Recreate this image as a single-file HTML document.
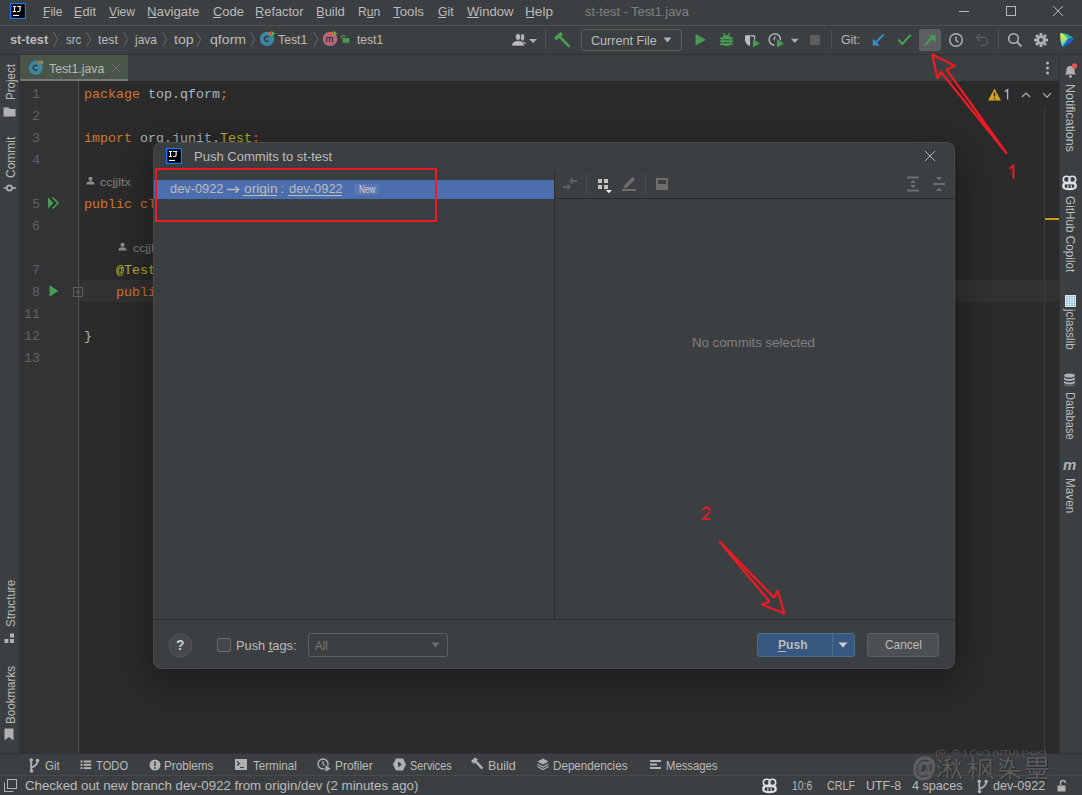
<!DOCTYPE html>
<html><head><meta charset="utf-8"><style>
html,body{margin:0;padding:0;}
body{width:1082px;height:795px;overflow:hidden;position:relative;background:#3C3F41;font-family:"Liberation Sans",sans-serif;}
.a{position:absolute;}
.t{position:absolute;white-space:pre;transform-origin:0 0;}
svg{position:absolute;overflow:visible;}
</style></head><body>
<div class="a" style="left:0px;top:25px;width:1082px;height:1px;background:#515151;"></div>
<div class="a" style="left:0px;top:54px;width:1082px;height:1px;background:#323232;"></div>
<div class="a" style="left:19px;top:55px;width:1px;height:698px;background:#323232;"></div>
<div class="a" style="left:20px;top:55px;width:108px;height:24px;background:#4A5449;"></div>
<div class="a" style="left:20px;top:79px;width:108px;height:3px;background:#747A80;"></div>
<div class="a" style="left:20px;top:81px;width:1039px;height:672px;background:#2B2B2B;"></div>
<div class="a" style="left:20px;top:81px;width:58px;height:672px;background:#313335;"></div>
<div class="a" style="left:78px;top:81px;width:1px;height:672px;background:#555555;"></div>
<div class="a" style="left:79px;top:280px;width:980px;height:22px;background:#323232;"></div>
<div class="a" style="left:20px;top:280px;width:58px;height:22px;background:#313335;"></div>
<div class="a" style="left:1059px;top:55px;width:1px;height:698px;background:#323232;"></div>
<div class="a" style="left:0px;top:753px;width:1082px;height:1px;background:#323232;"></div>
<div class="a" style="left:0px;top:775px;width:1082px;height:1px;background:#4A4A4A;"></div>
<svg style="left:10px;top:3px" width="16" height="16" viewBox="0 0 16 16"><rect x="0.6" y="0.6" width="14.8" height="14.8" fill="#000" stroke="#0A7CFF" stroke-width="1.2"/><path d="M2.9 3.5H6.1M4.5 3.5V8.5M2.9 8.5H6.1M7.2 3.5H11.2M10.1 3.5V7.3Q10.1 8.5 8.9 8.5H7.3" stroke="#fff" stroke-width="1.15" fill="none"/><rect x="3" y="11.9" width="6" height="1.1" fill="#fff"/></svg>
<div class="a" style="left:43px;top:17px;width:6px;height:1px;background:#BBBBBB;"></div>
<div class="a" style="left:74px;top:17px;width:7px;height:1px;background:#BBBBBB;"></div>
<div class="a" style="left:109px;top:17px;width:8px;height:1px;background:#BBBBBB;"></div>
<div class="a" style="left:148px;top:17px;width:9px;height:1px;background:#BBBBBB;"></div>
<div class="a" style="left:213px;top:17px;width:8px;height:1px;background:#BBBBBB;"></div>
<div class="a" style="left:256px;top:17px;width:7px;height:1px;background:#BBBBBB;"></div>
<div class="a" style="left:317px;top:17px;width:7px;height:1px;background:#BBBBBB;"></div>
<div class="a" style="left:367px;top:17px;width:7px;height:1px;background:#BBBBBB;"></div>
<div class="a" style="left:393px;top:17px;width:7px;height:1px;background:#BBBBBB;"></div>
<div class="a" style="left:438px;top:17px;width:8px;height:1px;background:#BBBBBB;"></div>
<div class="a" style="left:467px;top:17px;width:12px;height:1px;background:#BBBBBB;"></div>
<div class="a" style="left:526px;top:17px;width:8px;height:1px;background:#BBBBBB;"></div>
<svg style="left:950px;top:0px" width="120" height="25" viewBox="0 0 120 25"><path d="M9 11.5h10" stroke="#B8B8B8" stroke-width="1"/><rect x="56.5" y="6.5" width="9" height="9" fill="none" stroke="#B8B8B8" stroke-width="1"/><path d="M103 6l10 10M113 6l-10 10" stroke="#B8B8B8" stroke-width="1"/></svg>
<svg style="left:53px;top:32px" width="6" height="16" viewBox="0 0 6 16"><path d="M0.5 0.3L4.8 7.4L0.5 14.6" stroke="#6A6C6E" stroke-width="1" fill="none"/></svg>
<svg style="left:86px;top:32px" width="6" height="16" viewBox="0 0 6 16"><path d="M0.5 0.3L4.8 7.4L0.5 14.6" stroke="#6A6C6E" stroke-width="1" fill="none"/></svg>
<svg style="left:123px;top:32px" width="6" height="16" viewBox="0 0 6 16"><path d="M0.5 0.3L4.8 7.4L0.5 14.6" stroke="#6A6C6E" stroke-width="1" fill="none"/></svg>
<svg style="left:162px;top:32px" width="6" height="16" viewBox="0 0 6 16"><path d="M0.5 0.3L4.8 7.4L0.5 14.6" stroke="#6A6C6E" stroke-width="1" fill="none"/></svg>
<svg style="left:196px;top:32px" width="6" height="16" viewBox="0 0 6 16"><path d="M0.5 0.3L4.8 7.4L0.5 14.6" stroke="#6A6C6E" stroke-width="1" fill="none"/></svg>
<svg style="left:250px;top:32px" width="6" height="16" viewBox="0 0 6 16"><path d="M0.5 0.3L4.8 7.4L0.5 14.6" stroke="#6A6C6E" stroke-width="1" fill="none"/></svg>
<svg style="left:313px;top:32px" width="6" height="16" viewBox="0 0 6 16"><path d="M0.5 0.3L4.8 7.4L0.5 14.6" stroke="#6A6C6E" stroke-width="1" fill="none"/></svg>
<svg style="left:0;top:0" width="1082" height="795"><circle cx="267" cy="38.9" r="7.2" fill="#3E86A0"/><path d="M268.6 37.2A2.4 2.4 0 1 0 268.6 40.6" stroke="#2A3338" stroke-width="1.3" fill="none"/><path d="M267.8 33.5L271.3 31.1V35.9z" fill="#E8642C"/><path d="M275.2 33.5L271.7 31.1V35.9z" fill="#59B35A"/></svg>
<svg style="left:0;top:0" width="1082" height="795"><circle cx="330.1" cy="38.9" r="7.2" fill="#B5697D"/><path d="M326.6 42.3V37.6M326.6 38.4Q326.6 37.3 328 37.3T329.6 38.4V42.3M329.6 38.4Q329.6 37.3 331 37.3T332.6 38.4V42.3" stroke="#3A2A30" stroke-width="1.1" fill="none"/><path d="M329.8 33.5L333.4 31.1V35.9z" fill="#E8642C"/><path d="M337.4 33.5L333.8 31.1V35.9z" fill="#59B35A"/></svg>
<svg style="left:0;top:0" width="1082" height="795"><path d="M341.6 38.5V37.2A1.9 1.9 0 0 1 345.2 36.8" stroke="#499C54" stroke-width="1.3" fill="none"/><rect x="342.8" y="38" width="6.5" height="4.8" fill="#499C54"/></svg>
<svg style="left:0;top:0" width="1082" height="795"><g fill="#AFB1B3"><ellipse cx="522.6" cy="37.3" rx="1.7" ry="3.3"/><path d="M521 41.2Q525.6 41.6 526 44H523z"/></g><g fill="#BDBFC1" stroke="#3C3F41" stroke-width="0.8"><ellipse cx="518" cy="37" rx="2.6" ry="3.4"/><path d="M511.6 46Q511.8 41 518 40.6Q524.2 41 524.4 46z"/></g><path d="M529 39H537L533 43z" fill="#AFB1B3"/></svg>
<div class="a" style="left:545px;top:30px;width:1px;height:19px;background:#515151;"></div>
<svg style="left:554px;top:32px" width="17" height="17" viewBox="0 0 17 17"><path d="M1.2 7.2L7.8 1.2" stroke="#499C54" stroke-width="3.6"/><path d="M5.5 4.5L15.6 14.8" stroke="#499C54" stroke-width="2.6"/></svg>
<div class="a" style="left:581px;top:29px;width:101px;height:22px;background:transparent;border:1px solid #5E6060;border-radius:3px;box-sizing:border-box;"></div>
<svg style="left:663px;top:37px" width="10" height="6" viewBox="0 0 10 6"><path d="M0.5 0.5h8l-4 5z" fill="#AFB1B3"/></svg>
<svg style="left:695px;top:34px" width="12" height="12" viewBox="0 0 12 12"><path d="M0.5 0L11 5.8 0.5 11.6z" fill="#499C54"/></svg>
<svg style="left:0;top:0" width="1082" height="795"><g stroke="#499C54" stroke-width="1.3"><path d="M723.3 33.2L725 35.6M729.7 33.2L728 35.6"/></g><rect x="721.6" y="35.2" width="9.8" height="10.8" rx="4.6" fill="#499C54"/><path d="M720 38.3H733M720 41.3H733M720 44.2H733" stroke="#499C54" stroke-width="1.5"/><path d="M723 39.8H730M723 42.8H730" stroke="#3C3F41" stroke-width="1"/></svg>
<svg style="left:0;top:0" width="1082" height="795"><path d="M745 35.6L750 35V46Q745.3 44.2 745 40z" fill="#BDBFC1"/><path d="M750.6 35.6L754.6 36.1V40.5" stroke="#BDBFC1" stroke-width="1.2" fill="none"/><path d="M752.6 38.6L760.6 43.4 752.6 48.2z" fill="#499C54" stroke="#3C3F41" stroke-width="0.9"/></svg>
<svg style="left:0;top:0" width="1082" height="795"><path d="M779.6 42.5A5.7 5.7 0 1 0 774.5 45.2" stroke="#BDBFC1" stroke-width="1.3" fill="none"/><path d="M775.2 36.5L773.8 40.2" stroke="#BDBFC1" stroke-width="1.1"/><path d="M776.6 38.6L784.6 43.4 776.6 48.2z" fill="#499C54" stroke="#3C3F41" stroke-width="0.9"/></svg>
<svg style="left:0;top:0" width="1082" height="795"><path d="M791 38.8H798.6L794.8 43z" fill="#AFB1B3"/></svg>
<div class="a" style="left:810px;top:35px;width:10px;height:10px;background:#5E5E5E;"></div>
<div class="a" style="left:831px;top:30px;width:1px;height:19px;background:#515151;"></div>
<svg style="left:872px;top:34px" width="13" height="12" viewBox="0 0 13 12"><path d="M11.5 0.8L3 9.3" stroke="#3592C4" stroke-width="2"/><path d="M0.8 4.5v7h7z" fill="#3592C4"/></svg>
<svg style="left:897px;top:34px" width="15" height="12" viewBox="0 0 15 12"><path d="M1.3 5.5l4 4.5L13.8 0.8" stroke="#499C54" stroke-width="2" fill="none"/></svg>
<div class="a" style="left:919px;top:29px;width:22px;height:22px;background:#5C5F61;border-radius:3px;"></div>
<svg style="left:924px;top:35px" width="12" height="11" viewBox="0 0 12 11"><path d="M0.8 10L9 1.8" stroke="#499C54" stroke-width="2"/><path d="M4.5 0.3h7v7z" fill="#499C54"/></svg>
<svg style="left:948px;top:32px" width="16" height="16" viewBox="0 0 16 16"><circle cx="8" cy="8" r="6.3" fill="none" stroke="#AFB1B3" stroke-width="1.4"/><path d="M8 4.5v3.8l2.5 2" stroke="#AFB1B3" stroke-width="1.4" fill="none"/></svg>
<svg style="left:975px;top:33px" width="15" height="14" viewBox="0 0 15 14"><path d="M5 1L1.5 4.5 5 8" stroke="#5A5D5F" stroke-width="1.4" fill="none"/><path d="M1.5 4.5h7a4 4 0 0 1 0 8h-3" stroke="#5A5D5F" stroke-width="1.4" fill="none"/></svg>
<div class="a" style="left:998px;top:30px;width:1px;height:19px;background:#515151;"></div>
<svg style="left:1007px;top:32px" width="16" height="16" viewBox="0 0 16 16"><circle cx="6.5" cy="6.5" r="4.8" fill="none" stroke="#AFB1B3" stroke-width="1.6"/><path d="M10 10l4.5 4.5" stroke="#AFB1B3" stroke-width="1.8"/></svg>
<svg style="left:1034px;top:33px" width="14" height="14" viewBox="0 0 14 14"><g fill="#AFB1B3"><circle cx="7" cy="7" r="4.6"/><rect x="5.6" y="0" width="2.8" height="3" transform="rotate(0 7 7)"/><rect x="5.6" y="0" width="2.8" height="3" transform="rotate(45 7 7)"/><rect x="5.6" y="0" width="2.8" height="3" transform="rotate(90 7 7)"/><rect x="5.6" y="0" width="2.8" height="3" transform="rotate(135 7 7)"/><rect x="5.6" y="0" width="2.8" height="3" transform="rotate(180 7 7)"/><rect x="5.6" y="0" width="2.8" height="3" transform="rotate(225 7 7)"/><rect x="5.6" y="0" width="2.8" height="3" transform="rotate(270 7 7)"/><rect x="5.6" y="0" width="2.8" height="3" transform="rotate(315 7 7)"/></g><circle cx="7" cy="7" r="1.9" fill="#3C3F41"/></svg>
<svg style="left:1059px;top:32px" width="16" height="16" viewBox="0 0 16 16"><defs><linearGradient id="lgA" x1="0" y1="0" x2="0" y2="1"><stop offset="0" stop-color="#F7F53A"/><stop offset="0.55" stop-color="#8BE08C"/><stop offset="1" stop-color="#2BC8E6"/></linearGradient><linearGradient id="lgB" x1="0" y1="0" x2="1" y2="1"><stop offset="0" stop-color="#3FD77A"/><stop offset="1" stop-color="#18A0E8"/></linearGradient></defs><path d="M1.4 0.8Q8.5 1 15 6.8L9.1 6.6Q6 3 1.4 0.8z" fill="url(#lgB)"/><path d="M15 6.8Q11 13 3.3 15.1L9.1 6.6z" fill="#1D5FC4"/><path d="M1.4 0.8Q6 3 9.1 6.6 6 11 3.3 15.1Q0.5 8 1.4 0.8z" fill="url(#lgA)"/></svg>
<svg style="left:0;top:0" width="1082" height="795"><circle cx="35.8" cy="67.7" r="7.1" fill="#3E86A0"/><path d="M37.4 66A2.4 2.4 0 1 0 37.4 69.4" stroke="#2A3338" stroke-width="1.3" fill="none"/><path d="M36.9 62.3L40.3 59.9V64.7z" fill="#E8642C"/><path d="M44.1 62.3L40.7 59.9V64.7z" fill="#59B35A"/></svg>
<svg style="left:111px;top:63px" width="10" height="10" viewBox="0 0 10 10"><path d="M1 1l8 8M9 1l-8 8" stroke="#6E7072" stroke-width="1"/></svg>
<svg style="left:1045px;top:61px" width="5" height="14" viewBox="0 0 5 14"><circle cx="2.5" cy="2" r="1.5" fill="#AFB1B3"/><circle cx="2.5" cy="7" r="1.5" fill="#AFB1B3"/><circle cx="2.5" cy="12" r="1.5" fill="#AFB1B3"/></svg>
<svg style="left:86px;top:176px" width="9" height="10" viewBox="0 0 9 10"><circle cx="4.5" cy="2.8" r="2.1" fill="#8C8C8C"/><path d="M0.3 8.6q0-3.4 4.2-3.4t4.2 3.4z" fill="#8C8C8C"/></svg>
<svg style="left:118px;top:242px" width="9" height="10" viewBox="0 0 9 10"><circle cx="4.5" cy="2.8" r="2.1" fill="#8C8C8C"/><path d="M0.3 8.6q0-3.4 4.2-3.4t4.2 3.4z" fill="#8C8C8C"/></svg>
<svg style="left:47px;top:197px" width="13" height="12" viewBox="0 0 13 12"><path d="M1 0.5L6.5 6 1 11.5z" fill="#499C54"/><path d="M5.5 0.5L11 6 5.5 11.5" stroke="#499C54" stroke-width="1.6" fill="none"/></svg>
<svg style="left:49px;top:285px" width="10" height="12" viewBox="0 0 10 12"><path d="M0.5 0.2L9.5 6 0.5 11.8z" fill="#499C54"/></svg>
<svg style="left:73px;top:287px" width="10" height="10" viewBox="0 0 10 10"><rect x="0.5" y="0.5" width="9" height="9" fill="none" stroke="#5C5F61"/><path d="M2.5 5h5M5 2.5v5" stroke="#5C5F61"/></svg>
<svg style="left:988px;top:88px" width="14" height="13" viewBox="0 0 14 13"><path d="M6.5 0.5L13 12.5H0z" fill="#D6A11F"/><path d="M6.5 4.5v4M6.5 10v1.2" stroke="#2B2B2B" stroke-width="1.5"/></svg>
<svg style="left:1004px;top:89px" width="6" height="11" viewBox="0 0 6 11"><path d="M0.8 2.6L3.6 0.8V10.5" stroke="#A9B7C6" stroke-width="1.3" fill="none"/></svg>
<svg style="left:1021px;top:92px" width="10" height="6" viewBox="0 0 10 6"><path d="M1 5l4-4 4 4" stroke="#AFB1B3" stroke-width="1.2" fill="none"/></svg>
<svg style="left:1042px;top:92px" width="10" height="7" viewBox="0 0 10 7"><path d="M1 1.2l4 4 4-4" stroke="#AFB1B3" stroke-width="1.2" fill="none"/></svg>
<div class="a" style="left:1044px;top:106px;width:1px;height:647px;background:#3E3E3E;"></div>
<div class="a" style="left:1045px;top:218px;width:14px;height:2px;background:#C99A18;"></div>
<div class="t" style="left:3px;top:100.0px;font-size:12px;line-height:16px;color:#BBBBBB;transform-origin:0 0;transform:rotate(-90deg) scaleX(0.9602);">Project</div>
<svg style="left:3px;top:107px" width="13" height="10" viewBox="0 0 13 10"><path d="M0.5 0.5h5l1.5 1.5h5.5v7.5H0.5z" fill="#AFB1B3"/></svg>
<div class="t" style="left:3px;top:178.0px;font-size:12px;line-height:16px;color:#BBBBBB;transform-origin:0 0;transform:rotate(-90deg) scaleX(1.0000);">Commit</div>
<svg style="left:3px;top:183px" width="13" height="10" viewBox="0 0 13 10"><circle cx="6.5" cy="5" r="2.6" fill="none" stroke="#AFB1B3" stroke-width="1.6"/><path d="M0.5 5h3M9.5 5h3.5" stroke="#AFB1B3" stroke-width="1.6"/></svg>
<div class="t" style="left:3px;top:626.5px;font-size:12px;line-height:16px;color:#BBBBBB;transform-origin:0 0;transform:rotate(-90deg) scaleX(0.9692);">Structure</div>
<svg style="left:4px;top:633px" width="12" height="11" viewBox="0 0 12 11"><rect x="6" y="0.5" width="4" height="4" fill="#AFB1B3"/><rect x="0.5" y="6" width="4" height="4" fill="#AFB1B3"/><rect x="6" y="6" width="4" height="4" fill="#AFB1B3"/></svg>
<div class="t" style="left:3px;top:724.0px;font-size:12px;line-height:16px;color:#BBBBBB;transform-origin:0 0;transform:rotate(-90deg) scaleX(0.9664);">Bookmarks</div>
<svg style="left:4px;top:728px" width="10" height="13" viewBox="0 0 10 13"><path d="M0.5 0.5h9v12l-4.5-3.5-4.5 3.5z" fill="#AFB1B3"/></svg>
<svg style="left:1062px;top:63px" width="16" height="16" viewBox="0 0 16 16"><path d="M3 11.5q1.5-1 1.5-4.5a4 4 0 0 1 8 0q0 3.5 1.5 4.5z" fill="#AFB1B3"/><circle cx="8.5" cy="13.5" r="1.4" fill="#AFB1B3"/><circle cx="12.5" cy="3" r="2.7" fill="#E05555"/></svg>
<div class="t" style="left:1078px;top:84.0px;font-size:12px;line-height:16px;color:#BBBBBB;transform-origin:0 0;transform:rotate(90deg) scaleX(1.0404);">Notifications</div>
<svg style="left:1061px;top:175px" width="18" height="16" viewBox="0 0 18 16"><g fill="none" stroke="#DFE1E5" stroke-width="1.6"><ellipse cx="5.6" cy="4.4" rx="3.3" ry="3.1"/><ellipse cx="11.4" cy="4.4" rx="3.3" ry="3.1"/></g><path d="M1.2 10.5Q1.2 8 3 7.5L14 7.5Q15.8 8 15.8 10.5L15.8 12Q15.5 15 8.5 15.2 1.5 15 1.2 12z" fill="#DFE1E5"/><path d="M3.8 9.5H13.2V12.2Q8.5 14 3.8 12.2z" fill="#2F3133"/><rect x="6.2" y="10.2" width="1.3" height="2.6" fill="#DFE1E5"/><rect x="9.5" y="10.2" width="1.3" height="2.6" fill="#DFE1E5"/></svg>
<div class="t" style="left:1078px;top:196.0px;font-size:12px;line-height:16px;color:#BBBBBB;transform-origin:0 0;transform:rotate(90deg) scaleX(0.9784);">GitHub Copilot</div>
<svg style="left:1065px;top:295px" width="11" height="12" viewBox="0 0 11 12"><rect x="0" y="0" width="11" height="12" fill="#CDEBFA"/><path d="M2 1v10M4.5 1v10M7 1v10M9.5 1v10" stroke="#4A6F8F" stroke-width="0.7" stroke-dasharray="1 0.8"/></svg>
<div class="t" style="left:1078px;top:309.0308711523728px;font-size:12px;line-height:16px;color:#BBBBBB;transform-origin:0 0;transform:rotate(90deg) scaleX(0.9691);">jclasslib</div>
<svg style="left:1063px;top:373px" width="13" height="14" viewBox="0 0 13 14"><ellipse cx="6.5" cy="2.5" rx="5.5" ry="2" fill="#AFB1B3"/><path d="M1 4.5q5.5 3 11 0v2q-5.5 3-11 0zM1 8q5.5 3 11 0v2q-5.5 3-11 0zM1 11.3q5.5 3 11 0v0.5q-5.5 3-11 0z" fill="#AFB1B3"/></svg>
<div class="t" style="left:1078px;top:392.0px;font-size:12px;line-height:16px;color:#BBBBBB;transform-origin:0 0;transform:rotate(90deg) scaleX(0.9285);">Database</div>
<div class="t" style="left:1078px;top:477.5px;font-size:12px;line-height:16px;color:#BBBBBB;transform-origin:0 0;transform:rotate(90deg) scaleX(0.9761);">Maven</div>
<svg style="left:29px;top:758px" width="11" height="15" viewBox="0 0 11 15"><circle cx="2.2" cy="2" r="1.8" fill="#AFB1B3"/><circle cx="2.5" cy="13" r="1.8" fill="#AFB1B3"/><circle cx="8.5" cy="2.5" r="1.8" fill="#AFB1B3"/><path d="M2.2 2v11M8.5 2.5q0 5-6 7" stroke="#AFB1B3" stroke-width="1.9" fill="none"/></svg>
<svg style="left:80px;top:760px" width="12" height="10" viewBox="0 0 12 10"><g fill="#AFB1B3"><rect x="0.5" y="0.5" width="2" height="2"/><rect x="0.5" y="3.8" width="2" height="2"/><rect x="0.5" y="7.1" width="2" height="2"/><rect x="3.7" y="0.5" width="7.5" height="2"/><rect x="3.7" y="3.8" width="7.5" height="2"/><rect x="3.7" y="7.1" width="7.5" height="2"/></g></svg>
<svg style="left:149px;top:759px" width="12" height="12" viewBox="0 0 12 12"><circle cx="6" cy="6" r="5.5" fill="#AFB1B3"/><path d="M6 2.5v4.5M6 8.3v1.5" stroke="#3C3F41" stroke-width="1.6"/></svg>
<svg style="left:235px;top:759px" width="12" height="11" viewBox="0 0 12 11"><rect x="0" y="0" width="12" height="11" fill="#AFB1B3"/><path d="M2 2.5l2.5 2-2.5 2M5 8.5h4" stroke="#3C3F41" stroke-width="1.2" fill="none"/></svg>
<svg style="left:317px;top:758px" width="15" height="14" viewBox="0 0 15 14"><circle cx="6" cy="6" r="5" fill="none" stroke="#AFB1B3" stroke-width="1.4"/><path d="M6 3v3l1.8 1.5" stroke="#AFB1B3" stroke-width="1.2" fill="none"/><path d="M8 6.5l6.5 4-6.5 4z" fill="#AFB1B3" stroke="#3C3F41" stroke-width="1"/></svg>
<svg style="left:393px;top:758px" width="13" height="13" viewBox="0 0 13 13"><path d="M3 0.5h7l3 6-3 6H3L0 6.5z" fill="#AFB1B3"/><path d="M5 3.5l4 3-4 3z" fill="#3C3F41"/></svg>
<svg style="left:470px;top:757px" width="14" height="14" viewBox="0 0 14 14"><path d="M1 4L5 0.5l3 2-1.2 1.2 6.5 7-1.8 1.8-6.5-7L4 7z" fill="#AFB1B3"/></svg>
<svg style="left:537px;top:758px" width="12" height="12" viewBox="0 0 12 12"><path d="M6 0.5l5.5 3-5.5 3-5.5-3z" fill="#AFB1B3"/><path d="M0.5 6l5.5 3 5.5-3M0.5 8.5l5.5 3 5.5-3" stroke="#AFB1B3" stroke-width="1.2" fill="none"/></svg>
<svg style="left:650px;top:760px" width="12" height="10" viewBox="0 0 12 10"><g fill="#AFB1B3"><rect x="0" y="0" width="11" height="2"/><rect x="0" y="3.5" width="7" height="2"/><rect x="0" y="7" width="11" height="2"/></g></svg>
<svg style="left:4px;top:779px" width="13" height="13" viewBox="0 0 13 13"><rect x="3.5" y="0.5" width="9" height="9" fill="none" stroke="#AFB1B3"/><path d="M0.5 3.5v9h9" stroke="#AFB1B3" fill="none"/></svg>
<svg style="left:761px;top:778px" width="18" height="16" viewBox="0 0 18 16"><g fill="none" stroke="#DFE1E5" stroke-width="1.6"><ellipse cx="5.6" cy="4.4" rx="3.3" ry="3.1"/><ellipse cx="11.4" cy="4.4" rx="3.3" ry="3.1"/></g><path d="M1.2 10.5Q1.2 8 3 7.5L14 7.5Q15.8 8 15.8 10.5L15.8 12Q15.5 15 8.5 15.2 1.5 15 1.2 12z" fill="#DFE1E5"/><path d="M3.8 9.5H13.2V12.2Q8.5 14 3.8 12.2z" fill="#2F3133"/><rect x="6.2" y="10.2" width="1.3" height="2.6" fill="#DFE1E5"/><rect x="9.5" y="10.2" width="1.3" height="2.6" fill="#DFE1E5"/></svg>
<svg style="left:0;top:0" width="1082" height="795"><g fill="#AFB1B3"><circle cx="979.3" cy="781.2" r="1.7"/><circle cx="986.2" cy="781.4" r="1.7"/><circle cx="979.6" cy="791.6" r="1.7"/></g><path d="M979.3 781.2V791.6M986.2 781.4Q986.2 786.5 979.5 788.6" stroke="#AFB1B3" stroke-width="1.8" fill="none"/></svg>
<svg style="left:1057px;top:780px" width="13" height="12" viewBox="0 0 13 12"><path d="M3.5 5V3a2.5 2.5 0 0 1 5 0" stroke="#AFB1B3" stroke-width="1.4" fill="none"/><rect x="0.5" y="5.5" width="8" height="6" fill="#AFB1B3"/></svg>
<div class="t" style="left:42.67px;top:2.50px;line-height:18px;font-size:13px;color:#BBBBBB;font-weight:normal;font-family:'Liberation Sans',sans-serif;transform:scaleX(0.9332);">File</div>
<div class="t" style="left:73.62px;top:2.50px;line-height:18px;font-size:13px;color:#BBBBBB;font-weight:normal;font-family:'Liberation Sans',sans-serif;transform:scaleX(0.9821);">Edit</div>
<div class="t" style="left:109.30px;top:2.50px;line-height:18px;font-size:13px;color:#BBBBBB;font-weight:normal;font-family:'Liberation Sans',sans-serif;transform:scaleX(0.9351);">View</div>
<div class="t" style="left:147.38px;top:2.50px;line-height:18px;font-size:13px;color:#BBBBBB;font-weight:normal;font-family:'Liberation Sans',sans-serif;transform:scaleX(1.0184);">Navigate</div>
<div class="t" style="left:213.00px;top:2.50px;line-height:18px;font-size:13px;color:#BBBBBB;font-weight:normal;font-family:'Liberation Sans',sans-serif;transform:scaleX(0.9952);">Code</div>
<div class="t" style="left:255.41px;top:2.50px;line-height:18px;font-size:13px;color:#BBBBBB;font-weight:normal;font-family:'Liberation Sans',sans-serif;transform:scaleX(0.9856);">Refactor</div>
<div class="t" style="left:316.40px;top:2.50px;line-height:18px;font-size:13px;color:#BBBBBB;font-weight:normal;font-family:'Liberation Sans',sans-serif;transform:scaleX(0.9972);">Build</div>
<div class="t" style="left:357.97px;top:2.50px;line-height:18px;font-size:13px;color:#BBBBBB;font-weight:normal;font-family:'Liberation Sans',sans-serif;transform:scaleX(0.9329);">Run</div>
<div class="t" style="left:393.20px;top:2.50px;line-height:18px;font-size:13px;color:#BBBBBB;font-weight:normal;font-family:'Liberation Sans',sans-serif;transform:scaleX(1.0211);">Tools</div>
<div class="t" style="left:438.30px;top:2.50px;line-height:18px;font-size:13px;color:#BBBBBB;font-weight:normal;font-family:'Liberation Sans',sans-serif;transform:scaleX(0.9353);">Git</div>
<div class="t" style="left:467.10px;top:2.50px;line-height:18px;font-size:13px;color:#BBBBBB;font-weight:normal;font-family:'Liberation Sans',sans-serif;transform:scaleX(1.0032);">Window</div>
<div class="t" style="left:525.25px;top:2.50px;line-height:18px;font-size:13px;color:#BBBBBB;font-weight:normal;font-family:'Liberation Sans',sans-serif;transform:scaleX(1.0468);">Help</div>
<div class="t" style="left:584.60px;top:2.50px;line-height:18px;font-size:13px;color:#7F8183;font-weight:normal;font-family:'Liberation Sans',sans-serif;transform:scaleX(0.9873);">st-test - Test1.java</div>
<div class="t" style="left:10.20px;top:30.80px;line-height:18px;font-size:13px;color:#BBBBBB;font-weight:bold;font-family:'Liberation Sans',sans-serif;transform:scaleX(0.9779);">st-test</div>
<div class="t" style="left:65.60px;top:30.80px;line-height:18px;font-size:13px;color:#BBBBBB;font-weight:normal;font-family:'Liberation Sans',sans-serif;transform:scaleX(0.8806);">src</div>
<div class="t" style="left:98.00px;top:30.80px;line-height:18px;font-size:13px;color:#BBBBBB;font-weight:normal;font-family:'Liberation Sans',sans-serif;transform:scaleX(0.9512);">test</div>
<div class="t" style="left:134.92px;top:30.80px;line-height:18px;font-size:13px;color:#BBBBBB;font-weight:normal;font-family:'Liberation Sans',sans-serif;transform:scaleX(0.9173);">java</div>
<div class="t" style="left:173.80px;top:30.80px;line-height:18px;font-size:13px;color:#BBBBBB;font-weight:normal;font-family:'Liberation Sans',sans-serif;transform:scaleX(1.0873);">top</div>
<div class="t" style="left:210.30px;top:30.80px;line-height:18px;font-size:13px;color:#BBBBBB;font-weight:normal;font-family:'Liberation Sans',sans-serif;transform:scaleX(1.0864);">qform</div>
<div class="t" style="left:278.10px;top:30.80px;line-height:18px;font-size:13px;color:#BBBBBB;font-weight:normal;font-family:'Liberation Sans',sans-serif;transform:scaleX(0.9435);">Test1</div>
<div class="t" style="left:357.30px;top:30.80px;line-height:18px;font-size:13px;color:#BBBBBB;font-weight:normal;font-family:'Liberation Sans',sans-serif;transform:scaleX(0.9265);">test1</div>
<div class="t" style="left:590.50px;top:31.70px;line-height:18px;font-size:13px;color:#BBBBBB;font-weight:normal;font-family:'Liberation Sans',sans-serif;transform:scaleX(0.9678);">Current File</div>
<div class="t" style="left:841.20px;top:30.80px;line-height:18px;font-size:13px;color:#BBBBBB;font-weight:normal;font-family:'Liberation Sans',sans-serif;transform:scaleX(0.9433);">Git:</div>
<div class="t" style="left:48.50px;top:60.00px;line-height:18px;font-size:13px;color:#BBBBBB;font-weight:normal;font-family:'Liberation Sans',sans-serif;transform:scaleX(0.9443);">Test1.java</div>
<div class="t" style="left:32.00px;top:84.95px;line-height:19px;font-size:13.333px;color:#606366;font-weight:normal;font-family:'Liberation Mono',sans-serif;">1</div>
<div class="t" style="left:32.00px;top:106.95px;line-height:19px;font-size:13.333px;color:#606366;font-weight:normal;font-family:'Liberation Mono',sans-serif;">2</div>
<div class="t" style="left:32.00px;top:128.95px;line-height:19px;font-size:13.333px;color:#606366;font-weight:normal;font-family:'Liberation Mono',sans-serif;">3</div>
<div class="t" style="left:32.00px;top:150.95px;line-height:19px;font-size:13.333px;color:#606366;font-weight:normal;font-family:'Liberation Mono',sans-serif;">4</div>
<div class="t" style="left:32.00px;top:194.95px;line-height:19px;font-size:13.333px;color:#606366;font-weight:normal;font-family:'Liberation Mono',sans-serif;">5</div>
<div class="t" style="left:32.00px;top:216.95px;line-height:19px;font-size:13.333px;color:#606366;font-weight:normal;font-family:'Liberation Mono',sans-serif;">6</div>
<div class="t" style="left:32.00px;top:260.95px;line-height:19px;font-size:13.333px;color:#606366;font-weight:normal;font-family:'Liberation Mono',sans-serif;">7</div>
<div class="t" style="left:32.00px;top:282.95px;line-height:19px;font-size:13.333px;color:#606366;font-weight:normal;font-family:'Liberation Mono',sans-serif;">8</div>
<div class="t" style="left:24.00px;top:304.95px;line-height:19px;font-size:13.333px;color:#606366;font-weight:normal;font-family:'Liberation Mono',sans-serif;">11</div>
<div class="t" style="left:24.00px;top:326.95px;line-height:19px;font-size:13.333px;color:#606366;font-weight:normal;font-family:'Liberation Mono',sans-serif;">12</div>
<div class="t" style="left:24.00px;top:348.95px;line-height:19px;font-size:13.333px;color:#606366;font-weight:normal;font-family:'Liberation Mono',sans-serif;">13</div>
<div class="t" style="left:84.00px;top:84.95px;line-height:19px;font-size:13.333px;color:#CC7832;font-weight:normal;font-family:'Liberation Mono',sans-serif;">package</div>
<div class="t" style="left:140.00px;top:84.95px;line-height:19px;font-size:13.333px;color:#A9B7C6;font-weight:normal;font-family:'Liberation Mono',sans-serif;"> top.qform</div>
<div class="t" style="left:220.00px;top:84.95px;line-height:19px;font-size:13.333px;color:#CC7832;font-weight:normal;font-family:'Liberation Mono',sans-serif;">;</div>
<div class="t" style="left:84.00px;top:128.95px;line-height:19px;font-size:13.333px;color:#CC7832;font-weight:normal;font-family:'Liberation Mono',sans-serif;">import</div>
<div class="t" style="left:132.00px;top:128.95px;line-height:19px;font-size:13.333px;color:#A9B7C6;font-weight:normal;font-family:'Liberation Mono',sans-serif;"> org.junit.</div>
<div class="t" style="left:220.00px;top:128.95px;line-height:19px;font-size:13.333px;color:#BBB529;font-weight:normal;font-family:'Liberation Mono',sans-serif;">Test</div>
<div class="t" style="left:252.00px;top:128.95px;line-height:19px;font-size:13.333px;color:#CC7832;font-weight:normal;font-family:'Liberation Mono',sans-serif;">;</div>
<div class="t" style="left:84.00px;top:194.95px;line-height:19px;font-size:13.333px;color:#CC7832;font-weight:normal;font-family:'Liberation Mono',sans-serif;">public class Test1 {</div>
<div class="t" style="left:116.00px;top:260.95px;line-height:19px;font-size:13.333px;color:#BBB529;font-weight:normal;font-family:'Liberation Mono',sans-serif;">@Test</div>
<div class="t" style="left:116.00px;top:282.95px;line-height:19px;font-size:13.333px;color:#CC7832;font-weight:normal;font-family:'Liberation Mono',sans-serif;">public void test1() {</div>
<div class="t" style="left:84.00px;top:326.95px;line-height:19px;font-size:13.333px;color:#A9B7C6;font-weight:normal;font-family:'Liberation Mono',sans-serif;">}</div>
<div class="t" style="left:100.00px;top:173.52px;line-height:16px;font-size:11.5px;color:#858585;font-weight:normal;font-family:'Liberation Sans',sans-serif;transform:scaleX(1.0931);">ccjjltx</div>
<div class="t" style="left:132.50px;top:239.52px;line-height:16px;font-size:11.5px;color:#858585;font-weight:normal;font-family:'Liberation Sans',sans-serif;transform:scaleX(1.0931);">ccjjltx</div>
<div class="t" style="left:1063.00px;top:453.80px;line-height:21px;font-size:15px;color:#AFB1B3;font-weight:bold;font-family:'Liberation Sans',sans-serif;transform:scaleX(1.0000);font-style:italic;">m</div>
<div class="t" style="left:45.00px;top:756.50px;line-height:18px;font-size:13px;color:#BBBBBB;font-weight:normal;font-family:'Liberation Sans',sans-serif;transform:scaleX(0.8824);">Git</div>
<div class="t" style="left:96.00px;top:756.50px;line-height:18px;font-size:13px;color:#BBBBBB;font-weight:normal;font-family:'Liberation Sans',sans-serif;transform:scaleX(0.8601);">TODO</div>
<div class="t" style="left:164.10px;top:756.50px;line-height:18px;font-size:13px;color:#BBBBBB;font-weight:normal;font-family:'Liberation Sans',sans-serif;transform:scaleX(0.9006);">Problems</div>
<div class="t" style="left:252.50px;top:756.50px;line-height:18px;font-size:13px;color:#BBBBBB;font-weight:normal;font-family:'Liberation Sans',sans-serif;transform:scaleX(0.8916);">Terminal</div>
<div class="t" style="left:334.68px;top:756.50px;line-height:18px;font-size:13px;color:#BBBBBB;font-weight:normal;font-family:'Liberation Sans',sans-serif;transform:scaleX(0.9156);">Profiler</div>
<div class="t" style="left:410.00px;top:756.50px;line-height:18px;font-size:13px;color:#BBBBBB;font-weight:normal;font-family:'Liberation Sans',sans-serif;transform:scaleX(0.8342);">Services</div>
<div class="t" style="left:487.54px;top:756.50px;line-height:18px;font-size:13px;color:#BBBBBB;font-weight:normal;font-family:'Liberation Sans',sans-serif;transform:scaleX(0.9575);">Build</div>
<div class="t" style="left:553.10px;top:756.50px;line-height:18px;font-size:13px;color:#BBBBBB;font-weight:normal;font-family:'Liberation Sans',sans-serif;transform:scaleX(0.8957);">Dependencies</div>
<div class="t" style="left:666.13px;top:756.50px;line-height:18px;font-size:13px;color:#BBBBBB;font-weight:normal;font-family:'Liberation Sans',sans-serif;transform:scaleX(0.8681);">Messages</div>
<div class="t" style="left:25.00px;top:776.50px;line-height:18px;font-size:13px;color:#BBBBBB;font-weight:normal;font-family:'Liberation Sans',sans-serif;transform:scaleX(1.0212);">Checked out new branch dev-0922 from origin/dev (2 minutes ago)</div>
<div class="t" style="left:792.00px;top:776.50px;line-height:18px;font-size:13px;color:#BBBBBB;font-weight:normal;font-family:'Liberation Sans',sans-serif;transform:scaleX(0.7977);">10:6</div>
<div class="t" style="left:827.00px;top:776.50px;line-height:18px;font-size:13px;color:#BBBBBB;font-weight:normal;font-family:'Liberation Sans',sans-serif;transform:scaleX(0.8234);">CRLF</div>
<div class="t" style="left:866.04px;top:776.50px;line-height:18px;font-size:13px;color:#BBBBBB;font-weight:normal;font-family:'Liberation Sans',sans-serif;transform:scaleX(0.9551);">UTF-8</div>
<div class="t" style="left:912.00px;top:776.50px;line-height:18px;font-size:13px;color:#BBBBBB;font-weight:normal;font-family:'Liberation Sans',sans-serif;transform:scaleX(0.9708);">4 spaces</div>
<div class="t" style="left:993.00px;top:776.50px;line-height:18px;font-size:13px;color:#BBBBBB;font-weight:normal;font-family:'Liberation Sans',sans-serif;transform:scaleX(0.9633);">dev-0922</div>
<div class="a" style="left:153px;top:142px;width:802px;height:527px;background:#3C3F41;border-radius:8px;border:1px solid #4A4B4C;box-sizing:border-box;box-shadow:0 10px 40px 4px rgba(0,0,0,0.38);"></div>
<svg style="left:166px;top:148px" width="16" height="16" viewBox="0 0 16 16"><rect x="0.6" y="0.6" width="14.8" height="14.8" fill="#000" stroke="#0A7CFF" stroke-width="1.2"/><path d="M2.9 3.5H6.1M4.5 3.5V8.5M2.9 8.5H6.1M7.2 3.5H11.2M10.1 3.5V7.3Q10.1 8.5 8.9 8.5H7.3" stroke="#fff" stroke-width="1.15" fill="none"/><rect x="3" y="11.9" width="6" height="1.1" fill="#fff"/></svg>
<svg style="left:924px;top:150px" width="12" height="12" viewBox="0 0 12 12"><path d="M1 1l10 10M11 1L1 11" stroke="#B4B4B4" stroke-width="1"/></svg>
<div class="a" style="left:154px;top:180px;width:400px;height:19px;background:#4B6EAF;"></div>
<svg style="left:0;top:0" width="1082" height="795"><path d="M227 189.5H238.8M235.2 186.3L238.8 189.5 235.2 192.7" stroke="#BBBBBB" stroke-width="1.3" fill="none"/></svg>
<div class="a" style="left:243px;top:195px;width:34px;height:1px;background:#BBBBBB;"></div>
<div class="a" style="left:288px;top:195px;width:54px;height:1px;background:#BBBBBB;"></div>
<div class="a" style="left:354px;top:184px;width:25px;height:11px;background:#5A78B4;border-radius:2px;"></div>
<div class="a" style="left:554px;top:170px;width:1px;height:449px;background:#2B2B2B;"></div>
<div class="a" style="left:555px;top:198px;width:400px;height:1px;background:#2B2B2B;"></div>
<div class="a" style="left:153px;top:619px;width:802px;height:1px;background:#2B2B2B;"></div>
<svg style="left:0;top:0" width="1082" height="795"><g fill="#606262"><path d="M569 180.9L572.8 177V184.7z"/><rect x="572" y="180" width="5" height="2"/><path d="M571 187L567.4 183.2V191z"/><rect x="562.8" y="186" width="5" height="2"/></g></svg>
<div class="a" style="left:586px;top:174px;width:1px;height:20px;background:#515151;"></div>
<svg style="left:0;top:0" width="1082" height="795"><g fill="#C4C4C4"><rect x="598" y="179" width="4" height="4"/><rect x="604" y="179" width="4" height="4"/><rect x="598" y="185" width="4" height="4"/><rect x="604" y="185" width="4" height="4"/></g><path d="M605.8 190H612L608.9 193.3z" fill="#E8E8E8"/></svg>
<svg style="left:0;top:0" width="1082" height="795"><path d="M625 187L634 178" stroke="#6E6E6E" stroke-width="3.2"/><path d="M624.2 188.2L625 187" stroke="#6E6E6E" stroke-width="2"/><rect x="622" y="189" width="14" height="2" fill="#6E6E6E"/></svg>
<div class="a" style="left:645px;top:174px;width:1px;height:20px;background:#515151;"></div>
<svg style="left:0;top:0" width="1082" height="795"><rect x="656" y="178" width="12" height="12" fill="#6E6E6E"/><rect x="658" y="180" width="8" height="4" fill="#3C3F41"/></svg>
<svg style="left:906px;top:176px" width="14" height="16" viewBox="0 0 14 16"><rect x="1" y="0.5" width="12" height="2" fill="#6E6E6E"/><rect x="1" y="13.5" width="12" height="2" fill="#6E6E6E"/><path d="M4 7h6l-3-3zM4 9h6l-3 3z" fill="#6E6E6E"/></svg>
<svg style="left:932px;top:176px" width="14" height="16" viewBox="0 0 14 16"><rect x="1" y="7" width="12" height="2" fill="#6E6E6E"/><path d="M4 1h6l-3 3.5zM4 15h6l-3-3.5z" fill="#6E6E6E"/></svg>
<svg style="left:168px;top:633px" width="25" height="25" viewBox="0 0 25 25"><circle cx="12.5" cy="12.5" r="11.5" fill="#45494B" stroke="#56595B" stroke-width="1"/></svg>
<div class="a" style="left:217px;top:638px;width:14px;height:14px;background:#43494A;border:1px solid #6B6B6B;border-radius:2px;box-sizing:border-box;"></div>
<div class="a" style="left:268px;top:651px;width:5px;height:1px;background:#BBBBBB;"></div>
<div class="a" style="left:308px;top:633px;width:140px;height:24px;background:transparent;border:1px solid #5E6060;border-radius:3px;box-sizing:border-box;"></div>
<svg style="left:431px;top:642px" width="10" height="6" viewBox="0 0 10 6"><path d="M0.5 0.5h8l-4 5z" fill="#6E6E6E"/></svg>
<div class="a" style="left:757px;top:633px;width:98px;height:24px;background:#365880;border:1px solid #4C708C;border-radius:3px;box-sizing:border-box;"></div>
<div class="a" style="left:832px;top:634px;width:1px;height:22px;background:#4C708C;"></div>
<div class="a" style="left:778px;top:651px;width:8px;height:1px;background:#BBBBBB;"></div>
<svg style="left:838px;top:642px" width="10" height="6" viewBox="0 0 10 6"><path d="M0.5 0.5h9l-4.5 5z" fill="#CCCCCC"/></svg>
<div class="a" style="left:867px;top:633px;width:72px;height:24px;background:#4C5052;border:1px solid #5E6060;border-radius:3px;box-sizing:border-box;"></div>
<div class="t" style="left:193.60px;top:147.50px;line-height:18px;font-size:13px;color:#BBBBBB;font-weight:normal;font-family:'Liberation Sans',sans-serif;transform:scaleX(1.0017);">Push Commits to st-test</div>
<div class="t" style="left:169.60px;top:180.10px;line-height:18px;font-size:13px;color:#BBBBBB;font-weight:normal;font-family:'Liberation Sans',sans-serif;transform:scaleX(0.9856);">dev-0922</div>
<div class="t" style="left:243.50px;top:180.10px;line-height:18px;font-size:13px;color:#BBBBBB;font-weight:normal;font-family:'Liberation Sans',sans-serif;transform:scaleX(1.0550);">origin</div>
<div class="t" style="left:280.50px;top:180.10px;line-height:18px;font-size:13px;color:#BBBBBB;font-weight:normal;font-family:'Liberation Sans',sans-serif;transform:scaleX(1.0000);">:</div>
<div class="t" style="left:288.50px;top:180.10px;line-height:18px;font-size:13px;color:#BBBBBB;font-weight:normal;font-family:'Liberation Sans',sans-serif;transform:scaleX(0.9911);">dev-0922</div>
<div class="t" style="left:358.50px;top:181.69px;line-height:15px;font-size:11px;color:#C8D0DC;font-weight:normal;font-family:'Liberation Sans',sans-serif;transform:scaleX(0.7479);">New</div>
<div class="t" style="left:692.48px;top:333.50px;line-height:18px;font-size:13px;color:#808080;font-weight:normal;font-family:'Liberation Sans',sans-serif;transform:scaleX(1.0191);">No commits selected</div>
<div class="t" style="left:175.70px;top:634.43px;line-height:22px;font-size:15.5px;color:#CDCDCD;font-weight:bold;font-family:'Liberation Sans',sans-serif;transform:scaleX(0.8889);">?</div>
<div class="t" style="left:236.01px;top:636.90px;line-height:18px;font-size:13px;color:#BBBBBB;font-weight:normal;font-family:'Liberation Sans',sans-serif;transform:scaleX(0.9864);">Push tags:</div>
<div class="t" style="left:314.50px;top:636.90px;line-height:18px;font-size:13px;color:#787878;font-weight:normal;font-family:'Liberation Sans',sans-serif;transform:scaleX(0.8929);">All</div>
<div class="t" style="left:778.10px;top:636.00px;line-height:18px;font-size:13px;color:#BBBBBB;font-weight:bold;font-family:'Liberation Sans',sans-serif;transform:scaleX(0.9296);">Push</div>
<div class="t" style="left:884.60px;top:636.00px;line-height:18px;font-size:13px;color:#BBBBBB;font-weight:normal;font-family:'Liberation Sans',sans-serif;transform:scaleX(0.9118);">Cancel</div>
<svg style="left:0;top:0" width="1082" height="795"><rect x="156" y="169" width="280" height="52" fill="none" stroke="#EE1B24" stroke-width="2"/><path d="M932.3 54.4L954.9 65.8 946.4 69.4 1006.3 153 941 72 937.6 78.2Z" fill="none" stroke="#EE1B24" stroke-width="2.2" stroke-linejoin="round"/><path d="M784.3 613.5L762 604.6 769.4 601.4 719.9 542.1 774.1 597.5 777.7 590.9Z" fill="none" stroke="#EE1B24" stroke-width="2.2" stroke-linejoin="round"/></svg>
<svg style="left:0;top:0" width="1082" height="795"><path d="M1009.6 168.8L1013.4 165.6V178.6" stroke="#EE1B24" stroke-width="1.9" fill="none"/><path d="M703.2 510.2Q703.8 507.4 706.6 507.4Q709.8 507.5 709.8 510.3Q709.7 512.3 707.2 514.6L703.2 518.8H710.6" stroke="#EE1B24" stroke-width="1.8" fill="none"/></svg>

<svg style="left:0;top:0" width="1082" height="795"><g fill="none" stroke="#2A2B2C" stroke-width="2" stroke-linecap="round" opacity="0.8"><path transform="translate(937.9,757.9)" d="M2 3l2 2M1 9l2 2M1.5 20l3-5 M8 3.5l5-1.5M7 8h7M10.5 3v18M10.3 9l-3.5 6M10.7 9l3.5 4 M16 6l1 2M23 5l-1 2.5M19.5 2v10M19.3 12l-4 9M19.7 12l4.5 9"/><path transform="translate(968.9,757.9)" d="M1 7h8M5 1v21M4.8 8L1 16M5.2 9l3.5 4 M11.5 21l1-18h10v16l2.5 2M14.5 8l6 9M20.5 8l-6 9"/><path transform="translate(999.9,757.9)" d="M1.5 2l1.5 1.5M1 6.5l2 1.5M1.5 12l2-2M5 4h8v6l2 0.5M9.5 1L6 11 M0.5 14h21M11 11v11M10.8 15L2 21M11.2 15l9.5 6"/><path transform="translate(1026.9,757.9)" d="M2 1h18v8H2zM11 1v8M2 5h18 M0.5 12h21M3.5 14l0.8 1.5M8 14l0.5 1.5M14 14l-0.5 1.5M19 14l-0.8 1.5 M4 17.5h14M11 14.5v6.5M1 21h20"/></g><g fill="none" stroke="#5C5E60" stroke-width="1.7" stroke-linecap="round"><path transform="translate(937,757)" d="M2 3l2 2M1 9l2 2M1.5 20l3-5 M8 3.5l5-1.5M7 8h7M10.5 3v18M10.3 9l-3.5 6M10.7 9l3.5 4 M16 6l1 2M23 5l-1 2.5M19.5 2v10M19.3 12l-4 9M19.7 12l4.5 9"/><path transform="translate(968,757)" d="M1 7h8M5 1v21M4.8 8L1 16M5.2 9l3.5 4 M11.5 21l1-18h10v16l2.5 2M14.5 8l6 9M20.5 8l-6 9"/><path transform="translate(999,757)" d="M1.5 2l1.5 1.5M1 6.5l2 1.5M1.5 12l2-2M5 4h8v6l2 0.5M9.5 1L6 11 M0.5 14h21M11 11v11M10.8 15L2 21M11.2 15l9.5 6"/><path transform="translate(1026,757)" d="M2 1h18v8H2zM11 1v8M2 5h18 M0.5 12h21M3.5 14l0.8 1.5M8 14l0.5 1.5M14 14l-0.5 1.5M19 14l-0.8 1.5 M4 17.5h14M11 14.5v6.5M1 21h20"/></g></svg>
<div class="t" style="left:912.44px;top:750.44px;line-height:35px;font-size:25px;color:#2A2B2C;font-weight:normal;font-family:'Liberation Sans',sans-serif;transform:scaleX(0.9565);-webkit-text-stroke:0px;opacity:0.8;">@</div>
<div class="t" style="left:911.64px;top:749.64px;line-height:35px;font-size:25px;color:transparent;font-weight:normal;font-family:'Liberation Sans',sans-serif;transform:scaleX(0.9565);-webkit-text-stroke:1.6px #5C5E60;">@</div>
<div class="t" style="left:935.30px;top:746.73px;line-height:11px;font-size:8px;color:#5C5E60;font-weight:normal;font-family:'Liberation Sans',sans-serif;transform:scaleX(1.2038);">(⊙_⊙-) (˘ω˘) (UTU) (&gt;ω&lt;)</div>
</body></html>
